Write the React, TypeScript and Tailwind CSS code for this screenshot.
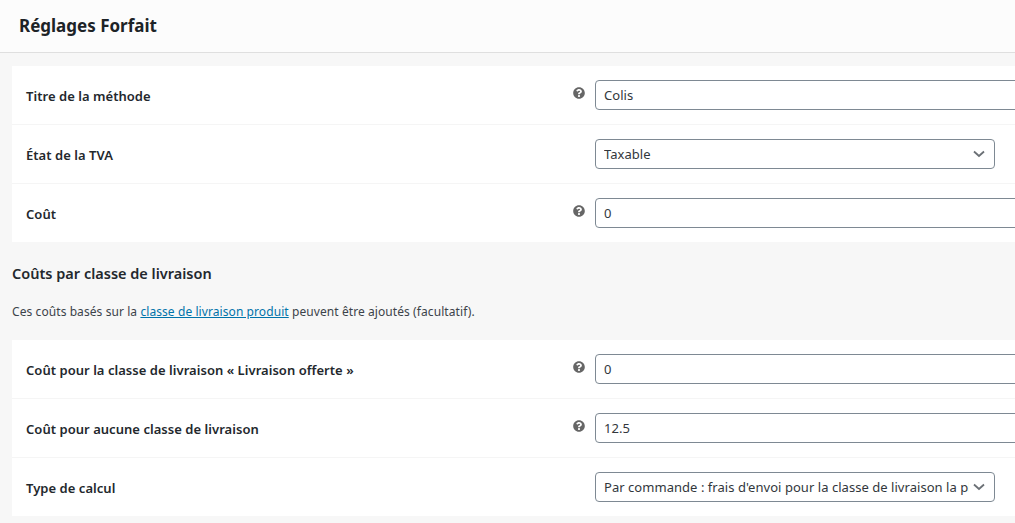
import { FaQuestionCircle } from 'react-icons/fa';

function HelpTip() {
    return <FaQuestionCircle className="absolute left-[-22px] top-[7px] text-[12px] text-[#666666]" />;
}

function Chevron() {
    return (
        <svg width="16" height="16" viewBox="0 0 16 16" className="shrink-0" fill="none">
            <path d="M3 5.5 L8 10 L13 5.5" stroke="#6b7075" strokeWidth="1.8" />
        </svg>
    );
}

function TextField({ value }: { value: string }) {
    return (
        <input
            readOnly
            value={value}
            className="h-[30px] w-[440px] rounded-[4px] border border-[#7e8993] bg-white px-2 text-[13px] tracking-[0.04px] text-[#32373c] outline-none"
        />
    );
}

function SelectField({ value }: { value: string }) {
    return (
        <div className="flex h-[30px] w-[400px] items-center justify-between rounded-[4px] border border-[#7e8993] bg-white pl-2 pr-[7px] text-[13px] tracking-[0.04px] text-[#32373c]">
            <span className="w-[365px] overflow-hidden whitespace-nowrap pt-[2px]">{value}</span>
            <Chevron />
        </div>
    );
}

function Row({ label, help, last, children }: { label: string; help?: boolean; last?: boolean; children: React.ReactNode }) {
    return (
        <div className={last ? 'flex h-[58px] items-start pl-[14px] pt-[14px]' : 'flex h-[59px] items-start border-b border-[#f5f5f5] pl-[14px] pt-[14px]'}>
            <div className="flex h-[30px] w-[569px] shrink-0 items-center pt-[3px] text-[13px] font-semibold tracking-[0.04px] text-[#23282d]">{label}</div>
            <div className="relative">
                {help && <HelpTip />}
                {children}
            </div>
        </div>
    );
}

export default function App() {
    return (
        <div className="h-[523px] w-[1015px] overflow-hidden bg-[#f7f7f7] font-['Noto_Sans',sans-serif]">
            <header className="flex h-[53px] items-center border-b border-[#dfdfdf] bg-[#fcfcfc] pl-[19px]">
                <h1 className="text-[17px] font-bold text-[#1d2327]">Réglages Forfait</h1>
            </header>

            <div className="mt-[13px] ml-[12px] w-[1040px] bg-white">
                <Row label="Titre de la méthode" help>
                    <TextField value="Colis" />
                </Row>
                <Row label="État de la TVA">
                    <SelectField value="Taxable" />
                </Row>
                <Row label="Coût" help last>
                    <TextField value="0" />
                </Row>
            </div>

            <h2 className="mt-[21px] ml-[12px] text-[14.5px] font-semibold leading-[20px] text-[#23282d]">Coûts par classe de livraison</h2>
            <p className="mt-[19px] ml-[12px] text-[12px] leading-[20px] tracking-[0.08px] text-[#3c434a]">
                Ces coûts basés sur la <a className="text-[#0073aa] underline">classe de livraison produit</a> peuvent être ajoutés (facultatif).
            </p>

            <div className="mt-[18px] ml-[12px] w-[1040px] bg-white">
                <Row label="Coût pour la classe de livraison « Livraison offerte »" help>
                    <TextField value="0" />
                </Row>
                <Row label="Coût pour aucune classe de livraison" help>
                    <TextField value="12.5" />
                </Row>
                <Row label="Type de calcul" last>
                    <SelectField value="Par commande : frais d'envoi pour la classe de livraison la plus chère" />
                </Row>
            </div>
        </div>
    );
}
